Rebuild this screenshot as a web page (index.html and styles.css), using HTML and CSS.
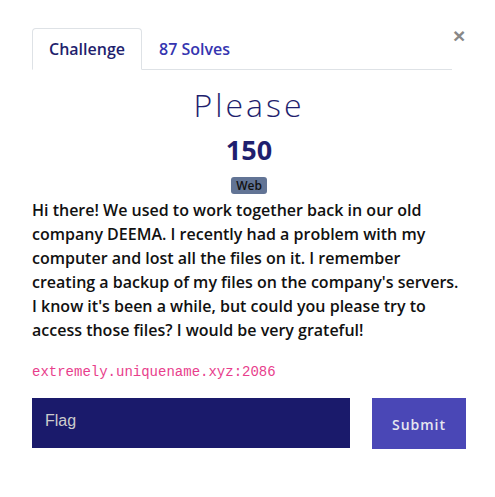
FILE: index.html
```html
<!DOCTYPE html>
<html>
<head>
<meta charset="utf-8">
<link rel="stylesheet" href="styles.css">
</head>
<body>
<div class="modal">
  <div class="head">
    <ul class="tabs">
      <li class="tab active">Challenge</li>
      <li class="tab">87 Solves</li>
    </ul>
    <span class="close">×</span>
  </div>
  <h2 class="title">Please</h2>
  <h3 class="value">150</h3>
  <div class="tags"><span class="badge">Web</span></div>
  <p class="desc">Hi there! We used to work together back in our old company DEEMA. I recently had a problem with my computer and lost all the files on it. I remember creating a backup of my files on the company's servers. I know it's been a while, but could you please try to access those files? I would be very grateful!</p>
  <p class="conn"><code>extremely.uniquename.xyz:2086</code></p>
  <form class="submit-row">
    <input class="flag" type="text" placeholder="Flag">
    <button class="btn" type="button">Submit</button>
  </form>
</div>
</body>
</html>
```
FILE: styles.css
```css
* { box-sizing: border-box; }
body {
  margin: 0;
  background: #fff;
  font-family: "Open Sans", "Liberation Sans", sans-serif;
  color: #212529;
}
.modal {
  padding: 28px 29px 0 32px;
}
.head {
  display: flex;
  align-items: flex-start;
}
.tabs {
  list-style: none;
  margin: 0;
  padding: 0;
  display: flex;
  flex: 0 0 420px;
  border-bottom: 1px solid #dee2e6;
  height: 42px;
}
.tab {
  font-size: 16px;
  font-weight: 600;
  color: #3535b0;
  padding: 0 16px;
  line-height: 40px;
  border: 1px solid transparent;
  border-top-left-radius: 4px;
  border-top-right-radius: 4px;
  margin-bottom: -1px;
}
.tab.active {
  color: #1f1f6e;
  border-color: #dee2e6 #dee2e6 #fff;
  background: #fff;
}
.close {
  margin-left: 1px;
  margin-top: -3px;
  font-family: "Liberation Sans", sans-serif;
  font-size: 21px;
  font-weight: 700;
  color: #888;
  line-height: 1;
}
.title {
  margin: 13px 0 0;
  text-align: center;
  font-family: "Open Sans", sans-serif;
  font-weight: 300;
  font-size: 32px;
  letter-spacing: 3px;
  line-height: 44px;
  color: #1f1f6e;
}
.value {
  margin: 5px 0 0;
  text-align: center;
  font-size: 27px;
  font-weight: 700;
  line-height: 36px;
  color: #1f1f6e;
}
.tags {
  text-align: center;
  margin-top: 9px;
  height: 17px;
  margin-bottom: 4px;
  line-height: 17px;
}
.badge {
  display: inline-block;
  vertical-align: top;
  background: #627495;
  color: #111;
  font-size: 12px;
  font-weight: 600;
  height: 17px;
  line-height: 17px;
  padding: 0 5px;
  border-radius: 3px;
}
.desc {
  margin: 0;
  font-size: 16px;
  font-weight: 600;
  line-height: 24px;
  color: #111;
  width: 434px;
}
.conn {
  margin: 18px 0 0;
  line-height: 20px;
}
code {
  font-family: "Liberation Mono", monospace;
  font-size: 14px;
  color: #e83e8c;
}
.submit-row {
  margin-top: 16px;
  display: flex;
  gap: 22px;
}
.flag {
  width: 318px;
  height: 50px;
  border: none;
  background: #1a1a6b;
  color: #ddd;
  font-family: "Liberation Sans", sans-serif;
  font-size: 16px;
  padding: 0 13px 4px;
  outline: none;
}
.flag::placeholder { color: #ccc; opacity: 1; }
.btn {
  width: 94px;
  height: 51px;
  border: none;
  background: #4a47b6;
  color: #e6e6f0;
  font-family: "Open Sans", sans-serif;
  font-size: 14px;
  font-weight: 600;
  letter-spacing: 1px;
  padding-top: 2px;
}
```
